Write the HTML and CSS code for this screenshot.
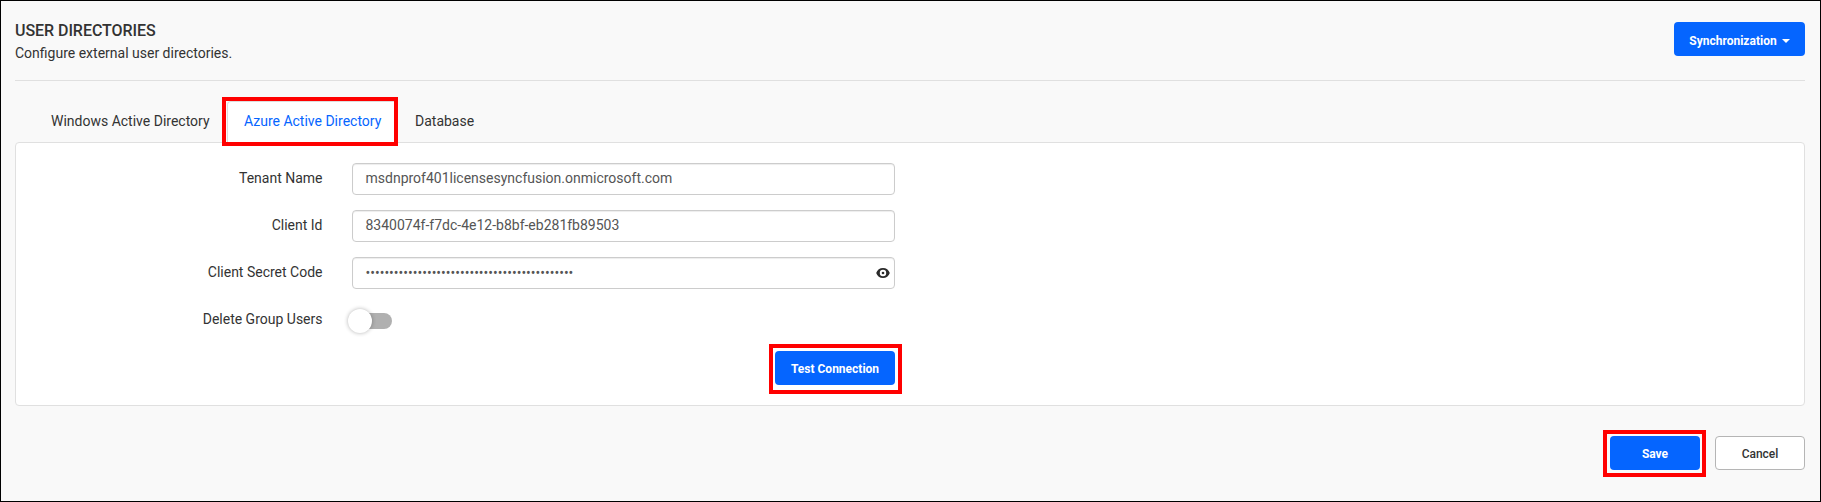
FILE: index.html
```html
<!DOCTYPE html>
<html lang="en">
<head>
<meta charset="utf-8">
<title>User Directories</title>
<link rel="stylesheet" href="styles.css">
</head>
<body>
<main class="page">
  <header class="page-header">
    <div>
      <h1 class="title">USER DIRECTORIES</h1>
      <p class="subtitle">Configure external user directories.</p>
    </div>
    <button class="btn btn-primary btn-sync"><span>Synchronization</span><span class="caret"></span></button>
  </header>
  <nav class="tabs">
    <a class="tab tab-windows">Windows Active Directory</a>
    <a class="tab tab-azure active">Azure Active Directory<span class="highlight highlight-tab"></span></a>
    <a class="tab tab-database">Database</a>
  </nav>
  <section class="panel">
    <div class="row">
      <span class="label">Tenant Name</span>
      <div class="field">msdnprof401licensesyncfusion.onmicrosoft.com</div>
    </div>
    <div class="row">
      <span class="label">Client Id</span>
      <div class="field">8340074f-f7dc-4e12-b8bf-eb281fb89503</div>
    </div>
    <div class="row">
      <span class="label">Client Secret Code</span>
      <div class="field field-secret"><span class="dots">••••••••••••••••••••••••••••••••••••••••••••</span>
        <svg class="eye" width="14" height="10" viewBox="0 0 14 10"><path fill="#2b2b2b" fill-rule="evenodd" d="M7 0C3.8 0 1.2 1.9.2 5c1 3.100 3.600 5 6.800 5s5.800-1.900 6.800-5C12.800 1.900 10.200 0 7 0zM7 1.800a3.200 3.200 0 1 1 0 6.400a3.200 3.200 0 0 1 0-6.400z"/><circle cx="7" cy="5" r="1.300" fill="#2b2b2b"/></svg>
      </div>
    </div>
    <div class="row">
      <span class="label">Delete Group Users</span>
      <span class="toggle"><span class="knob"></span></span>
    </div>
    <div class="actions">
      <button class="btn btn-primary btn-test">Test Connection<span class="highlight highlight-test"></span></button>
    </div>
  </section>
  <footer class="footer">
    <button class="btn btn-primary btn-save">Save<span class="highlight highlight-save"></span></button>
    <button class="btn btn-cancel">Cancel</button>
  </footer>
</main>
</body>
</html>
```
FILE: styles.css
```css
* { box-sizing: border-box; }
body { margin: 0; font-family: Roboto, sans-serif; font-size: 14px; color: #333; }
.page { height: 502px; padding: 0 15px 0 14px; border: 1px solid #000; background: #f9f9f9; }
.page-header { display: flex; justify-content: space-between; align-items: flex-start; height: 80px; padding-top: 21px; border-bottom: 1px solid #e0e0e0; }
.title { margin: -1px 0 0; font-size: 16px; line-height: 20px; font-weight: 500; letter-spacing: -0.05px; }
.subtitle { margin: 2px 0 0; line-height: 20px; }
.btn { position: relative; display: flex; align-items: center; justify-content: center; height: 34px; padding: 2px 0 0; border: 0; border-radius: 4px; font: 700 12px Roboto, sans-serif; }
.btn-primary { background: #0565ff; color: #fff; }
.btn-sync { width: 131px; padding-top: 3px; gap: 5px; }
.caret { border: 4px solid transparent; border-top-color: #fff; border-bottom: 0; }
.tabs { display: flex; height: 61px; padding: 20px 0 0 19px; }
.tab { position: relative; height: 42px; padding-left: 17px; line-height: 40px; white-space: nowrap; }
.tab-windows { width: 193px; }
.tab-azure { width: 171px; padding-left: 16px; line-height: 38px; z-index: 1; }
.active { color: #0565ff; background: #fff; border: 1px solid #ddd; border-bottom: 0; border-radius: 4px 4px 0 0; }
.panel { height: 264px; padding-top: 20px; background: #fff; border: 1px solid #e0e0e0; border-radius: 4px; }
.row { display: flex; height: 32px; margin-bottom: 15px; gap: 29.5px; }
.label { width: 306.5px; text-align: right; line-height: 31px; }
.field { display: flex; align-items: center; width: 543px; height: 32px; padding: 0 4px 2px 12.5px; border: 1px solid #ccc; border-radius: 4px; color: #555; box-shadow: inset 0 1px 1px rgba(0,0,0,.075); }
.field-secret { justify-content: space-between; padding-bottom: 0; }
.toggle { position: relative; width: 40px; height: 16px; margin-top: 9px; border-radius: 8px; background: #b0b0b0; }
.knob { position: absolute; left: -4px; top: -4px; width: 24px; height: 24px; border-radius: 50%; background: #fff; box-shadow: 0 0 4px rgba(0,0,0,.3); }
.actions { display: flex; justify-content: flex-end; width: 879px; }
.btn-test { width: 120px; }
.highlight { position: absolute; border: 4px solid #f00; }
.highlight-tab { left: -6px; top: -5px; width: 176px; height: 49px; }
.highlight-test { left: -6px; top: -7px; width: 133px; height: 50px; }
.highlight-save { left: -7px; top: -6px; width: 103px; height: 47px; }
.footer { display: flex; justify-content: flex-end; gap: 15px; padding-top: 30px; }
.btn-save, .btn-cancel { width: 90px; }
.btn-cancel { background: #fff; color: #333; border: 1px solid #b5b5b5; font-weight: 500; }
```
